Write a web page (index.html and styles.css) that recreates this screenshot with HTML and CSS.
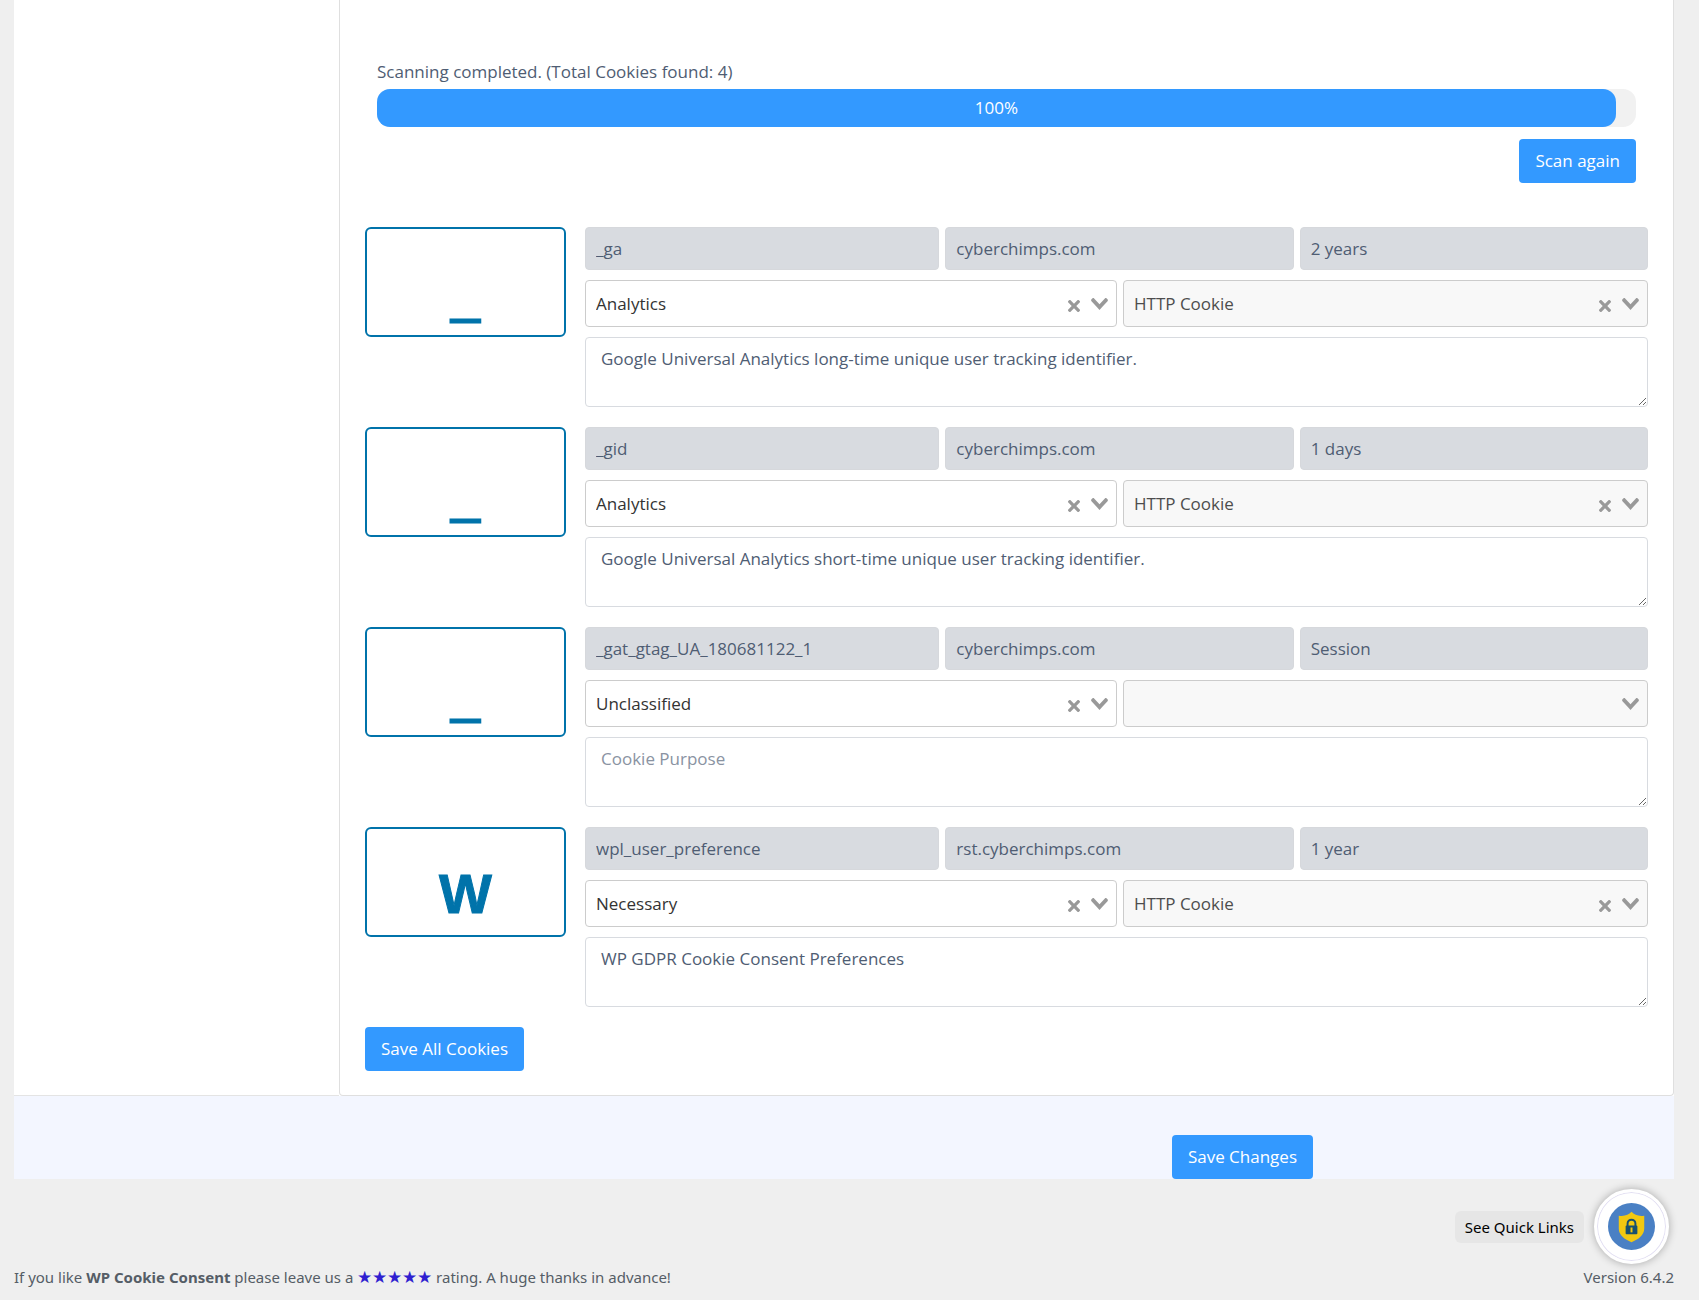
FILE: index.html
```html
<!DOCTYPE html>
<html lang="en">
<head>
<meta charset="UTF-8">
<meta name="viewport" content="width=device-width, initial-scale=1.0">
<title>Cookie Scanner</title>
<link rel="stylesheet" href="styles.css">
</head>
<body>

<svg class="sprite" aria-hidden="true">
    <symbol id="clear" viewBox="0 0 10 10">
        <path d="M6.895455 5l2.842897-2.842898c.348864-.348863.348864-.914488 0-1.263636L9.106534.261648c-.348864-.348864-.914489-.348864-1.263636 0L5 3.104545 2.157102.261648c-.348863-.348864-.914488-.348864-1.263636 0L.261648.893466c-.348864.348864-.348864.914489 0 1.263636L3.104545 5 .261648 7.842898c-.348864.348863-.348864.914488 0 1.263636l.631818.631818c.348864.348864.914773.348864 1.263636 0L5 6.895455l2.842898 2.842897c.348863.348864.914772.348864 1.263636 0l.631818-.631818c.348864-.348864.348864-.914489 0-1.263636L6.895455 5z"/>
    </symbol>
    <symbol id="arrow" viewBox="0 0 14 10">
        <path d="M9.211364 7.59931l4.48338-4.867229c.407008-.441854.407008-1.158247 0-1.60046l-.73712-.80023c-.407008-.441854-1.066904-.441854-1.474243 0L7 5.198617 2.51662.33139c-.407008-.441853-1.066904-.441853-1.474243 0l-.737121.80023c-.407008.441854-.407008 1.158248 0 1.600461l4.48338 4.867228L7 10l2.211364-2.40069z"/>
    </symbol>
</svg>

<div class="wrap">
    <div class="panel">
        <div class="sidebar"></div>
        <div class="content">
            <div class="scan">
                <p class="scan-status">Scanning completed. (Total Cookies found: 4)</p>
                <div class="progress">
                    <div class="progress-bar">100%</div>
                </div>
                <button type="button" class="btn">Scan again</button>
            </div>

            <form class="cookies">
                <div class="cookie">
                    <div class="cookie-letter underscore">_</div>
                    <div class="cookie-fields">
                        <div class="row-info">
                            <input type="text" value="_ga" aria-label="Cookie name" disabled>
                            <input type="text" value="cyberchimps.com" aria-label="Domain" disabled>
                            <input type="text" value="2 years" aria-label="Duration" disabled>
                        </div>
                        <div class="row-select">
                            <div class="select">
                                <select aria-label="Category"><option>Analytics</option><option>Necessary</option><option>Unclassified</option></select>
                                <button type="button" class="clear" aria-label="Clear"><svg><use href="#clear"/></svg></button>
                                <svg class="arrow"><use href="#arrow"/></svg>
                            </div>
                            <div class="select off">
                                <select aria-label="Type" disabled><option>HTTP Cookie</option></select>
                                <button type="button" class="clear" aria-label="Clear" disabled><svg><use href="#clear"/></svg></button>
                                <svg class="arrow"><use href="#arrow"/></svg>
                            </div>
                        </div>
                        <textarea placeholder="Cookie Purpose" aria-label="Cookie purpose">Google Universal Analytics long-time unique user tracking identifier.</textarea>
                    </div>
                </div>

                <div class="cookie">
                    <div class="cookie-letter underscore">_</div>
                    <div class="cookie-fields">
                        <div class="row-info">
                            <input type="text" value="_gid" aria-label="Cookie name" disabled>
                            <input type="text" value="cyberchimps.com" aria-label="Domain" disabled>
                            <input type="text" value="1 days" aria-label="Duration" disabled>
                        </div>
                        <div class="row-select">
                            <div class="select">
                                <select aria-label="Category"><option>Analytics</option><option>Necessary</option><option>Unclassified</option></select>
                                <button type="button" class="clear" aria-label="Clear"><svg><use href="#clear"/></svg></button>
                                <svg class="arrow"><use href="#arrow"/></svg>
                            </div>
                            <div class="select off">
                                <select aria-label="Type" disabled><option>HTTP Cookie</option></select>
                                <button type="button" class="clear" aria-label="Clear" disabled><svg><use href="#clear"/></svg></button>
                                <svg class="arrow"><use href="#arrow"/></svg>
                            </div>
                        </div>
                        <textarea placeholder="Cookie Purpose" aria-label="Cookie purpose">Google Universal Analytics short-time unique user tracking identifier.</textarea>
                    </div>
                </div>

                <div class="cookie">
                    <div class="cookie-letter underscore">_</div>
                    <div class="cookie-fields">
                        <div class="row-info">
                            <input type="text" value="_gat_gtag_UA_180681122_1" aria-label="Cookie name" disabled>
                            <input type="text" value="cyberchimps.com" aria-label="Domain" disabled>
                            <input type="text" value="Session" aria-label="Duration" disabled>
                        </div>
                        <div class="row-select">
                            <div class="select">
                                <select aria-label="Category"><option>Unclassified</option><option>Analytics</option><option>Necessary</option></select>
                                <button type="button" class="clear" aria-label="Clear"><svg><use href="#clear"/></svg></button>
                                <svg class="arrow"><use href="#arrow"/></svg>
                            </div>
                            <div class="select off">
                                <select aria-label="Type" disabled><option></option></select>
                                <svg class="arrow"><use href="#arrow"/></svg>
                            </div>
                        </div>
                        <textarea placeholder="Cookie Purpose" aria-label="Cookie purpose"></textarea>
                    </div>
                </div>

                <div class="cookie">
                    <div class="cookie-letter">W</div>
                    <div class="cookie-fields">
                        <div class="row-info">
                            <input type="text" value="wpl_user_preference" aria-label="Cookie name" disabled>
                            <input type="text" value="rst.cyberchimps.com" aria-label="Domain" disabled>
                            <input type="text" value="1 year" aria-label="Duration" disabled>
                        </div>
                        <div class="row-select">
                            <div class="select">
                                <select aria-label="Category"><option>Necessary</option><option>Analytics</option><option>Unclassified</option></select>
                                <button type="button" class="clear" aria-label="Clear"><svg><use href="#clear"/></svg></button>
                                <svg class="arrow"><use href="#arrow"/></svg>
                            </div>
                            <div class="select off">
                                <select aria-label="Type" disabled><option>HTTP Cookie</option></select>
                                <button type="button" class="clear" aria-label="Clear" disabled><svg><use href="#clear"/></svg></button>
                                <svg class="arrow"><use href="#arrow"/></svg>
                            </div>
                        </div>
                        <textarea placeholder="Cookie Purpose" aria-label="Cookie purpose">WP GDPR Cookie Consent Preferences</textarea>
                    </div>
                </div>

                <button type="button" class="btn">Save All Cookies</button>
            </form>
        </div>
    </div>

    <div class="save-bar">
        <button type="button" class="btn">Save Changes</button>
    </div>

    <footer class="footer">
        <p>If you like <strong>WP Cookie Consent</strong> please leave us a <a href="#" class="stars">★★★★★</a> rating. A huge thanks in advance!</p>
        <p>Version 6.4.2</p>
    </footer>
</div>

<div class="quick-links">
    <span class="quick-label">See Quick Links</span>
    <button type="button" class="quick-btn" aria-label="See Quick Links">
        <svg viewBox="0 0 48 48">
            <circle cx="24" cy="24" r="24" fill="#4a80c4"/>
            <path d="M24 9c3 3 7 5 13 4v13c0 7-6 11-13 14-7-3-13-7-13-14V13c6 1 10-1 13-4z" fill="#f2c811"/>
            <path d="M20 24v-3a4 4 0 0 1 8 0v3" fill="none" stroke="#17506f" stroke-width="2"/>
            <rect x="18" y="23" width="12" height="9" rx="1" fill="#17506f"/>
            <path d="M24 25v5" stroke="#f2c811" stroke-width="2"/>
        </svg>
    </button>
</div>

</body>
</html>
```

FILE: styles.css
```css
* {
    box-sizing: border-box;
}
body {
    margin: 0;
    font-family: "Open Sans", "Noto Sans", sans-serif;
    font-size: 17px;
    line-height: 24px;
    color: #4f5d73;
    background: #fff;
}
p {
    margin: 0;
}
button, input, select, textarea {
    font: inherit;
    color: inherit;
}
.sprite {
    display: none;
}
.wrap {
    background: #efefef;
    padding: 0 25px 11px 14px;
}

/* panel */
.panel {
    display: flex;
    background: #fff;
}
.sidebar {
    width: 325px;
    border-bottom: 1px solid #e4e4e4;
}
.content {
    flex: 1;
    padding: 60px 25px 24px;
    border: 1px solid #dfdfdf;
    border-top: none;
    border-radius: 0 0 4px 4px;
}
.btn {
    height: 44px;
    padding: 0 16px;
    color: #fff;
    background: #3399ff;
    border: none;
    border-radius: 4px;
    cursor: pointer;
}
.btn:hover {
    background: #1a8cff;
}

/* scan */
.scan {
    display: flex;
    flex-direction: column;
    align-items: flex-end;
    padding: 0 12px;
    margin-bottom: 44px;
}
.scan-status {
    width: 100%;
    margin-bottom: 5px;
}
.progress {
    width: 100%;
    margin-bottom: 12px;
    background: #f1f1f1;
    border-radius: 13px;
}
.progress-bar {
    width: 98.4%;
    line-height: 38px;
    text-align: center;
    color: #fff;
    background: #3399ff;
    border-radius: 13px;
}

/* cookie list */
.cookie {
    display: flex;
    align-items: flex-start;
    gap: 19px;
    margin-bottom: 20px;
}
.cookie-letter {
    width: 201px;
    height: 110px;
    padding-top: 22px;
    border: 2px solid #0073aa;
    border-radius: 6px;
    color: #0073aa;
    font: bold 56px/86px "Liberation Sans", Arial, sans-serif;
    -webkit-text-stroke: 1px #0073aa;
    text-align: center;
}
.cookie-letter.underscore {
    font-size: 50px;
    line-height: 96px;
    -webkit-text-stroke: 3px #0073aa;
}
.cookie-fields {
    flex: 1;
    display: flex;
    flex-direction: column;
    gap: 10px;
}
.row-info {
    display: grid;
    grid-template-columns: 354fr 348fr 348fr;
    gap: 6px;
}
.row-select {
    display: grid;
    grid-template-columns: 532fr 525fr;
    gap: 6px;
}
input {
    width: 100%;
    height: 43px;
    padding: 0 10px;
    background: #d8dbe0;
    border: 1px solid #d6d8dc;
    border-radius: 4px;
}
.select {
    display: flex;
    align-items: center;
    height: 47px;
    padding: 0 8px 0 10px;
    background: #fff;
    border: 1px solid #ccc;
    border-radius: 4px;
    color: #333;
}
.select select {
    flex: 1;
    height: 100%;
    padding: 0;
    appearance: none;
    background: none;
    border: none;
    opacity: 1;
}
.off {
    background: #f8f8f8;
    color: #4d4d4d;
}
.clear {
    display: flex;
    margin-right: 11px;
    padding: 4px 0 0;
    background: none;
    border: none;
}
.clear svg {
    width: 12px;
    height: 12px;
    fill: #999;
}
.arrow {
    width: 17px;
    height: 12px;
    fill: #999;
}
textarea {
    display: block;
    width: 100%;
    height: 70px;
    padding: 9px 15px;
    background: #fff;
    border: 1px solid #d8dbe0;
    border-radius: 4px;
}
textarea::placeholder {
    color: #8a93a2;
}

/* bottom */
.save-bar {
    display: flex;
    justify-content: flex-end;
    padding: 39px 361px 0 0;
    background: #f3f6ff;
}
.footer {
    display: flex;
    justify-content: space-between;
    padding-top: 86px;
    font-family: "Noto Sans", sans-serif;
    font-size: 15px;
    color: #555d66;
}
.stars {
    font-size: 17px;
    color: #2f1fd0;
    text-decoration: none;
}

.quick-links {
    position: fixed;
    right: 30px;
    bottom: 38px;
    display: flex;
    align-items: center;
    gap: 10px;
    font-family: "Noto Sans", sans-serif;
    font-size: 15px;
    color: #000;
}
.quick-label {
    padding: 4px 10px;
    background: #e6e6e6;
    border-radius: 6px;
}
.quick-btn {
    display: flex;
    align-items: center;
    justify-content: center;
    width: 75px;
    height: 75px;
    padding: 0;
    background: #fff;
    border: 3px solid #fff;
    border-radius: 50%;
    box-shadow: inset 0 0 0 1px #e2dff2, 0 0 8px rgba(0, 0, 0, 0.3);
    cursor: pointer;
}
.quick-btn svg {
    width: 47px;
    height: 47px;
}
```
